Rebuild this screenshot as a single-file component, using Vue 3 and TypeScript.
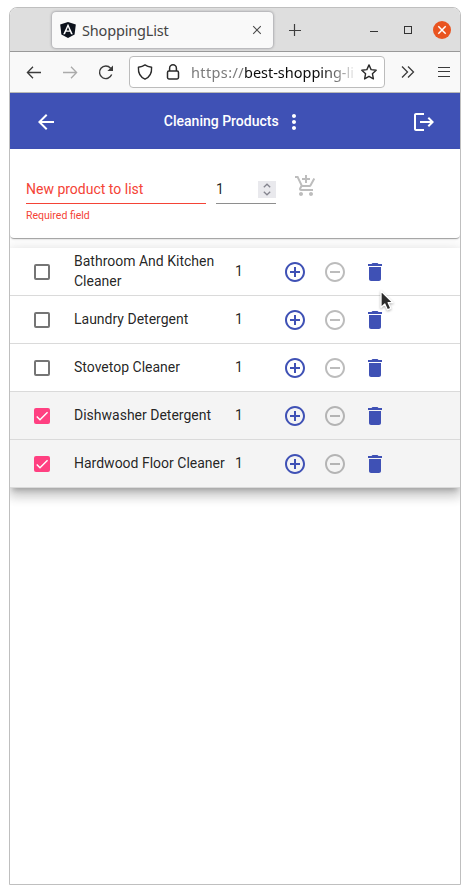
<script setup lang="ts">
import { ref } from 'vue'

interface Product {
  name: string
  amount: number
  done: boolean
}

const products = ref<Product[]>([
  { name: 'Bathroom And Kitchen Cleaner', amount: 1, done: false },
  { name: 'Laundry Detergent', amount: 1, done: false },
  { name: 'Stovetop Cleaner', amount: 1, done: false },
  { name: 'Dishwasher Detergent', amount: 1, done: true },
  { name: 'Hardwood Floor Cleaner', amount: 1, done: true },
])
</script>

<template>
  <div class="window">
    <div class="titlebar">
      <div class="tab">
        <svg class="favicon" viewBox="0 0 16 16" width="16" height="16">
          <path fill="#0b111b" d="M8 0 15.8 2.6 14.6 12.4 8 16 1.4 12.4 .2 2.6z" />
          <path fill="#fff" fill-rule="evenodd" d="M8 1.8 3.2 12.2H5l1-2.400h4l1 2.400h1.800zM8 5.100l1.400 3.300H6.600z" />
        </svg>
        <span class="tab-title">ShoppingList</span>
        <svg class="tab-close" viewBox="0 0 10 10" width="10" height="10">
          <path d="M1.2 1.2 8.8 8.8M8.8 1.2 1.2 8.8" stroke="#4a4a4a" stroke-width="1.1" fill="none" />
        </svg>
      </div>
      <svg class="new-tab" viewBox="0 0 12 12" width="12" height="12">
        <path d="M5.500 0v12M0 6.500h12" stroke="#3d3d3d" stroke-width="1.200" fill="none" />
      </svg>
      <span class="minimize"></span>
      <span class="maximize"></span>
      <span class="close">
        <svg viewBox="0 0 10 10" width="10" height="10">
          <path d="M1.3 1.3 8.7 8.7M8.7 1.3 1.3 8.7" stroke="#fff" stroke-width="1.5" fill="none" />
        </svg>
      </span>
    </div>

    <div class="navbar">
      <svg class="nav-back" viewBox="0 0 16 16" width="16" height="16">
        <path d="M15 8.500H1.600M7 2.800 1.400 8.500 7 14.200" stroke="#3b3b3b" stroke-width="1.300" fill="none" />
      </svg>
      <svg class="nav-forward" viewBox="0 0 16 16" width="16" height="16">
        <path d="M1 8.500h13.400M9 2.800 14.600 8.500 9 14.200" stroke="#ababab" stroke-width="1.300" fill="none" />
      </svg>
      <svg class="nav-reload" viewBox="0 0 16 16" width="16" height="16">
        <path d="M13.700 10.600A6.300 6.300 0 1 1 12.600 4.200" stroke="#3b3b3b" stroke-width="1.400" fill="none" />
        <path d="M15 1.400v5.600H9.400z" fill="#3b3b3b" />
      </svg>
      <div class="urlbar">
        <svg class="shield" viewBox="0 0 16 16" width="16" height="16">
          <path d="M8 .9C6.300 2.200 3.700 3 1.400 3.300c-.3 5.200 1.800 9.800 6.600 11.900 4.800-2.100 6.900-6.700 6.600-11.900C12.300 3 9.700 2.200 8 .9z" stroke="#2b2b2b" stroke-width="1.400" stroke-linejoin="round" fill="none" />
        </svg>
        <svg class="lock" viewBox="0 0 14 16" width="14" height="16">
          <rect x="1.500" y="7" width="11" height="8" rx="1.400" stroke="#2b2b2b" stroke-width="1.500" fill="none" />
          <path d="M3.600 7V4.200a3.400 3.400 0 0 1 6.800 0V7" stroke="#2b2b2b" stroke-width="1.500" fill="none" />
        </svg>
        <span class="url"><span class="scheme">https://</span>best-shopping-li</span>
        <svg class="star" viewBox="0 0 16 16" width="16" height="16">
          <path d="M8 .9l2.100 4.700 5.100.6-3.800 3.500 1 5.200L8 12.300l-4.400 2.600 1-5.200L.8 6.200l5.100-.6z" stroke="#2b2b2b" stroke-width="1.400" stroke-linejoin="round" fill="none" />
        </svg>
      </div>
      <svg class="overflow" viewBox="0 0 14 12" width="14" height="12">
        <path d="M1 .5 6.500 6 1 11.500M7 .5 12.500 6 7 11.500" stroke="#3b3b3b" stroke-width="1.300" fill="none" />
      </svg>
      <svg class="burger" viewBox="0 0 12 12" width="12" height="12">
        <path d="M0 1.500h12M0 5.500h12M0 10.500h12" stroke="#3b3b3b" stroke-width="1.200" fill="none" />
      </svg>
    </div>

    <header class="app-bar">
      <svg class="icon" viewBox="0 0 24 24"><path d="M20 11H7.830l5.590-5.590L12 4l-8 8 8 8 1.410-1.410L7.830 13H20v-2z" /></svg>
      <div class="heading">
        <h1>Cleaning Products</h1>
        <svg class="icon" viewBox="0 0 24 24"><path d="M12 8c1.100 0 2-.9 2-2s-.9-2-2-2-2 .9-2 2 .9 2 2 2zm0 2c-1.100 0-2 .9-2 2s.9 2 2 2 2-.9 2-2-.9-2-2-2zm0 6c-1.100 0-2 .9-2 2s.9 2 2 2 2-.9 2-2-.9-2-2-2z" /></svg>
      </div>
      <svg class="icon" viewBox="0 0 24 24"><path d="M12 3v2H4v14h8v2H4c-1.100 0-2-.9-2-2V5c0-1.100.9-2 2-2zM17 7l-1.410 1.410L18.170 11H8v2h10.170l-2.580 2.580L17 17l5-5z" /></svg>
    </header>

    <section class="form-card">
      <div class="product-field">
        <div class="field-line">New product to list</div>
        <div class="field-error">Required field</div>
      </div>
      <div class="amount-field">
        <span>1</span>
        <span class="spinner">
          <svg viewBox="0 0 8 13" width="8" height="13">
            <path d="M.8 4.200 4 1.200l3.200 3M.8 8.800 4 11.800l3.200-3" stroke="#85858f" stroke-width="1.300" fill="none" />
          </svg>
        </span>
      </div>
      <svg class="icon add-cart" viewBox="0 0 24 24"><path d="M11 9h2V6h3V4h-3V1h-2v3H8v2h3v3zm-4 9c-1.100 0-1.990.9-1.990 2S5.900 22 7 22s2-.9 2-2-.9-2-2-2zm10 0c-1.100 0-1.990.9-1.990 2s.89 2 1.990 2 2-.9 2-2-.9-2-2-2zm-9.830-3.250.03-.12.9-1.630h7.450c.75 0 1.410-.41 1.750-1.030l3.860-7.010L19.420 4h-.01l-1.100 2-2.760 5H8.530l-.13-.27L6.160 6l-.95-2-.94-2H1v2h2l3.600 7.590-1.350 2.450c-.16.28-.25.61-.25.960 0 1.100.9 2 2 2h12v-2H7.420c-.13 0-.25-.11-.25-.25z" /></svg>
    </section>

    <ul class="list">
      <li v-for="p in products" :key="p.name" class="row" :class="{ done: p.done }">
        <span class="checkbox" @click="p.done = !p.done">
          <svg v-if="p.done" viewBox="0 0 24 24" width="16" height="16">
            <path d="M4.100 12.700 9 17.600 20.300 6.300" stroke="#fff" stroke-width="2.130" fill="none" />
          </svg>
        </span>
        <span class="name">{{ p.name }}</span>
        <span class="amount">{{ p.amount }}</span>
        <svg class="icon action" viewBox="0 0 24 24"><path d="M13 7h-2v4H7v2h4v4h2v-4h4v-2h-4V7zm-1-5C6.480 2 2 6.480 2 12s4.480 10 10 10 10-4.480 10-10S17.520 2 12 2zm0 18c-4.410 0-8-3.590-8-8s3.590-8 8-8 8 3.590 8 8-3.590 8-8 8z" /></svg>
        <svg class="icon action disabled" viewBox="0 0 24 24"><path d="M7 11v2h10v-2H7zm5-9C6.480 2 2 6.480 2 12s4.480 10 10 10 10-4.480 10-10S17.520 2 12 2zm0 18c-4.410 0-8-3.590-8-8s3.590-8 8-8 8 3.590 8 8-3.590 8-8 8z" /></svg>
        <svg class="icon action" viewBox="0 0 24 24"><path d="M6 19c0 1.100.9 2 2 2h8c1.100 0 2-.9 2-2V7H6v12zM19 4h-3.500l-1-1h-5l-1 1H5v2h14V4z" /></svg>
      </li>
    </ul>

    <svg class="cursor" viewBox="0 0 16 24" width="16" height="24">
      <path d="M2 2v16.500l3.800-3.500 2.600 5.800 3.400-1.500-2.600-5.600H14z" fill="#2b2b2b" stroke="#fff" stroke-width="1.300" stroke-linejoin="round" />
    </svg>
  </div>
</template>

<style>
body {
  background: #fff;
}
</style>

<style scoped>
.window {
  position: relative;
  box-sizing: border-box;
  width: 452px;
  height: 878px;
  margin: 7px 0 0 9px;
  border: 1px solid #bfbfbf;
  border-radius: 8px 8px 0 0;
  overflow: hidden;
  background: #fff;
  font-family: Roboto, sans-serif;
  font-size: 14px;
  color: rgba(0, 0, 0, 0.87);
}
svg {
  display: block;
  flex: none;
}
.titlebar {
  display: flex;
  align-items: center;
  box-sizing: border-box;
  height: 44px;
  padding-left: 42px;
  background: #dedede;
  border-bottom: 1px solid #999;
}
.tab {
  display: flex;
  align-items: center;
  box-sizing: border-box;
  width: 221px;
  height: 36px;
  margin-top: 1px;
  padding: 0 11px 0 8px;
  border-radius: 4px;
  background: #f9f9f9;
  box-shadow: 0 0 3px rgba(0, 0, 20, 0.45);
}
.tab-title {
  flex: 1;
  margin-left: 6px;
  font: 14.5px 'Noto Sans', sans-serif;
  letter-spacing: -0.18px;
  color: #444;
}
.new-tab {
  margin-left: 16px;
}
.minimize {
  width: 8px;
  height: 1px;
  margin: 4px 0 0 69px;
  background: #333;
}
.maximize {
  box-sizing: border-box;
  width: 8px;
  height: 8px;
  margin-left: 26px;
  border: 1px solid #333;
}
.close {
  display: flex;
  align-items: center;
  justify-content: center;
  width: 18px;
  height: 18px;
  margin-left: 21px;
  border-radius: 50%;
  background: #e95420;
}
.navbar {
  display: flex;
  align-items: center;
  box-sizing: border-box;
  height: 41px;
  padding-left: 16px;
  background: #f9f9f9;
  border-bottom: 1px solid #b9b9b5;
}
.nav-forward,
.nav-reload {
  margin-left: 20px;
}
.urlbar {
  display: flex;
  align-items: center;
  box-sizing: border-box;
  width: 256px;
  height: 32px;
  margin-left: 15px;
  padding-left: 7px;
  border: 1px solid #bcbcbc;
  border-radius: 4px;
  background: #fff;
}
.lock {
  margin-left: 13px;
}
.url {
  width: 166px;
  margin-left: 11px;
  white-space: nowrap;
  font: 14.5px/20px 'Noto Sans', sans-serif;
  letter-spacing: -0.02px;
  color: #0c0c0c;
  mask-image: linear-gradient(to right, #000 130px, transparent 166px);
}
.scheme {
  letter-spacing: 0.38px;
  color: #7b7b7b;
}
.star {
  margin-left: 4px;
}
.overflow {
  margin-left: 16px;
}
.burger {
  margin-left: 23px;
}
.icon {
  width: 24px;
  height: 24px;
  fill: currentColor;
}
.app-bar {
  display: flex;
  align-items: center;
  justify-content: space-between;
  height: 56px;
  padding: 1px 24px 0;
  box-sizing: border-box;
  background: #3f51b5;
  color: #fff;
}
.heading {
  display: flex;
  align-items: center;
  gap: 3.5px;
}
h1 {
  margin: -2px 0 0;
  font-size: 14px;
  font-weight: 500;
  line-height: 20px;
}
.form-card {
  display: flex;
  box-sizing: border-box;
  height: 89px;
  padding: 24px 16px 0;
  border-radius: 0 0 4px 4px;
  box-shadow: 0 2px 1px -1px rgba(0, 0, 0, 0.2), 0 1px 1px rgba(0, 0, 0, 0.14), 0 1px 3px rgba(0, 0, 0, 0.12);
}
.product-field {
  width: 180px;
  color: #f44336;
}
.field-line {
  height: 30px;
  border-bottom: 1px solid #f44336;
  line-height: 32px;
}
.field-error {
  margin-top: 6px;
  font-size: 10.5px;
  line-height: 12px;
}
.amount-field {
  display: flex;
  justify-content: space-between;
  width: 60px;
  height: 30px;
  margin-left: 10px;
  border-bottom: 1px solid #8e8e8e;
  line-height: 32px;
}
.spinner {
  display: flex;
  align-items: center;
  justify-content: center;
  width: 18px;
  height: 17px;
  margin-top: 8px;
  background: #e9e9ed;
}
.add-cart {
  margin: 1px 0 0 18px;
  color: #bdbdbd;
}
.list {
  margin: 10px 0 0;
  padding: 0;
  list-style: none;
  box-shadow: 0 5px 5px -3px rgba(0, 0, 0, 0.2), 0 8px 10px 1px rgba(0, 0, 0, 0.14), 0 3px 14px 2px rgba(0, 0, 0, 0.12);
}
.row {
  display: flex;
  align-items: center;
  box-sizing: border-box;
  height: 48px;
  padding: 1px 0 0 24px;
  border-bottom: 1px solid #dadada;
  background: #fff;
}
.done {
  background: #f4f4f4;
}
.checkbox {
  flex: none;
  box-sizing: border-box;
  width: 16px;
  height: 16px;
  border: 2px solid #757575;
  border-radius: 2px;
}
.done .checkbox {
  border: 0;
  background: #ff4081;
}
.name {
  width: 153px;
  margin: -2px 0 0 24px;
  line-height: 20px;
}
.amount {
  width: 40.4px;
  margin: -2px 0 0 8px;
  line-height: 20px;
}
.action {
  margin: 0 8px;
  color: #3f51b5;
}
.disabled {
  color: #000;
  opacity: 0.26;
}
.cursor {
  position: absolute;
  left: 369px;
  top: 281px;
  filter: drop-shadow(0 1px 1px rgba(0, 0, 0, 0.3));
}
</style>
